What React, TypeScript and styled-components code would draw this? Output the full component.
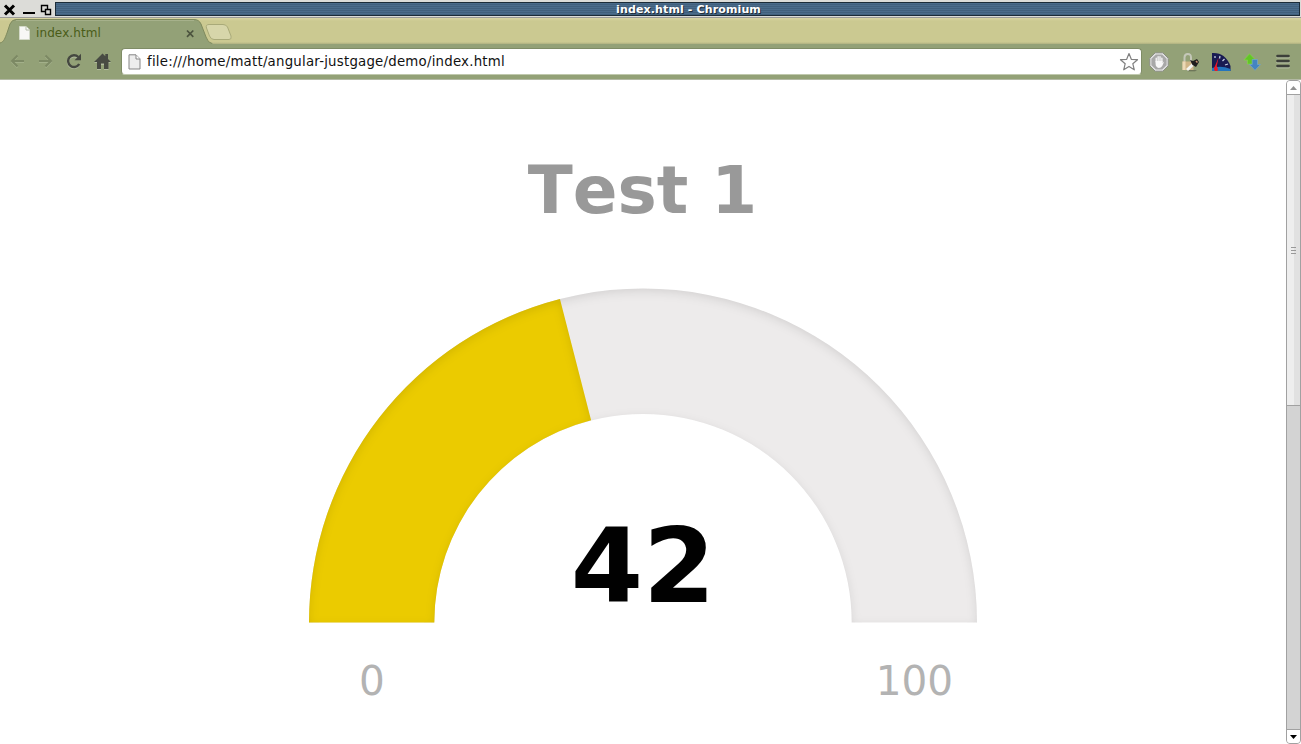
import React from 'react';
import styled, { createGlobalStyle } from 'styled-components';

const GlobalStyle = createGlobalStyle`
  html, body { margin: 0; padding: 0; overflow: hidden; background: #fff; }
  * { box-sizing: border-box; }
  svg { display: block; flex: none; }
`;

const Window = styled.div`
  width: 1301px;
  height: 744px;
  display: flex;
  flex-direction: column;
  font-family: "DejaVu Sans", sans-serif;
  overflow: hidden;
`;

const TitleBar = styled.header`
  height: 18px;
  flex: none;
  display: flex;
  background: #dcdcd8;
  padding-top: 2px;
  border-bottom: 1px solid #9b9b98;
`;

const WindowButtons = styled.div`
  width: 55px;
  flex: none;
`;

const Caption = styled.h1`
  margin: 0 1px 0 0;
  flex: 1;
  height: 14px;
  border: 1px solid #1c2c38;
  background: repeating-linear-gradient(#4b6c8b 0 1px, #41607d 1px 2px);
  color: #fff;
  font-size: 11px;
  line-height: 14px;
  font-weight: bold;
  letter-spacing: 0.13px;
  text-align: center;
  padding-left: 22px;
  text-shadow: 1px 1px 0 #222e38;
`;

const TabStrip = styled.nav`
  height: 26px;
  flex: none;
  position: relative;
  background: linear-gradient(#d8d5a2 0, #cbc991 3px, #cbc991 24px, #aeb080 26px);
`;

const TabShape = styled.svg`
  position: absolute;
  left: 0;
  top: 0;
`;

const TabContent = styled.div`
  position: relative;
  display: flex;
  align-items: center;
  width: 195px;
  height: 28px;
  padding: 2px 0 0 19px;
`;

const TabLabel = styled.span`
  flex: 1;
  margin-left: 6px;
  font-size: 12px;
  letter-spacing: 0.1px;
  line-height: 16px;
  color: #4a5c17;
`;

const Toolbar = styled.div`
  height: 36px;
  flex: none;
  display: flex;
  align-items: center;
  background: #93a177;
  border-bottom: 1px solid #b3b9a5;
  padding: 0 10px 0 9px;
`;

const NavButtons = styled.div`
  display: flex;
  gap: 12px;
  width: 112px;
`;

const AddressBar = styled.div`
  width: 1021px;
  height: 27px;
  display: flex;
  align-items: center;
  padding: 0 2px 0 6px;
  background: #fff;
  border: 1px solid #7f8c66;
  border-bottom-color: #c0c9ae;
  border-radius: 4px;
`;

const Url = styled.span`
  flex: 1;
  margin-left: 6px;
  font-size: 13.33px;
  line-height: 18px;
  letter-spacing: 0.22px;
  color: #111;
  white-space: nowrap;
`;

const Extensions = styled.div`
  display: flex;
  align-items: center;
  gap: 11px;
  margin-left: 7px;
`;

const Menu = styled.div`
  margin-left: 3px;
`;

const Viewport = styled.main`
  flex: 1;
  min-height: 0;
  display: flex;
  background: #fff;
`;

const Page = styled.section`
  width: 1286px;
  flex: none;
`;

const ScrollTrack = styled.aside`
  width: 15px;
  display: flex;
  flex-direction: column;
  background: #d3d3d3;
  border: 1px solid #a1a1a1;
  border-radius: 4px;
`;

const ScrollButton = styled.div<{ $end?: boolean }>`
  height: ${p => (p.$end ? '14px' : '13px')};
  flex: none;
  display: flex;
  align-items: center;
  justify-content: center;
  background: #fff;
  border-radius: ${p => (p.$end ? '0 0 3px 3px' : '3px 3px 0 0')};
  border-top: ${p => (p.$end ? '1px solid #a1a1a1' : '0')};
`;

const ScrollThumb = styled.div`
  height: 312px;
  flex: none;
  display: flex;
  align-items: center;
  justify-content: center;
  background: linear-gradient(90deg, #eee 0 7px, #e1e1e1 7px);
  border-top: 1px solid #a1a1a1;
  border-bottom: 1px solid #a1a1a1;
`;

const Gap = styled.div`
  flex: 1;
`;

function FileIcon({ outlined }: { outlined?: boolean }) {
  return outlined ? (
    <svg width="13" height="16" viewBox="0 0 13 16">
      <path d="M1 .8H8L12 4.8V15H1Z" fill="#ededed" stroke="#858585" />
      <path d="M8 1V5H12" fill="#fff" stroke="#858585" />
    </svg>
  ) : (
    <svg width="11" height="14" viewBox="0 0 11 14">
      <path d="M.5 .5H7L10.5 4V13.5H.5Z" fill="#f7f7f5" stroke="#d3d9c8" />
      <path d="M7 .5V4H10.5" fill="#fff" stroke="#b4bba6" />
    </svg>
  );
}

function BackArrow({ flip }: { flip?: boolean }) {
  return (
    <svg width="17" height="16" viewBox="0 0 17 16">
      <g transform={flip ? 'translate(16 0) scale(-1 1)' : undefined} fill="none" strokeWidth="2">
        <path d="M8.5 3.5L3 9L8.5 14.5M3.5 9H15" stroke="#a3b08a" />
        <path d="M8.5 2.5L3 8L8.5 13.5M3.5 8H15" stroke="#7c8964" />
      </g>
    </svg>
  );
}

function Gauge() {
  const cx = 643;
  const cy = 542.5;
  const outer = 334;
  const inner = 208.7;
  const band = (value: number) => {
    const a = (1 - value) * Math.PI;
    const at = (r: number) => `${cx + r * Math.cos(a)} ${cy - r * Math.sin(a)}`;
    return `M${cx - inner} ${cy}H${cx - outer}A${outer} ${outer} 0 0 1 ${at(outer)}L${at(inner)}A${inner} ${inner} 0 0 0 ${cx - inner} ${cy}Z`;
  };
  return (
    <svg width="1286" height="664" fontFamily="DejaVu Sans, sans-serif" textAnchor="middle">
      <defs>
        <filter id="inner-shadow" colorInterpolationFilters="sRGB">
          <feOffset dx="0" dy="3" />
          <feGaussianBlur result="offset-blur" stdDeviation="5" />
          <feComposite operator="out" in="SourceGraphic" in2="offset-blur" result="inverse" />
          <feFlood floodColor="#000" floodOpacity="0.1" result="color" />
          <feComposite operator="in" in="color" in2="inverse" result="shadow" />
          <feComposite operator="over" in="shadow" in2="SourceGraphic" />
        </filter>
      </defs>
      <path d={band(1)} fill="#edebeb" filter="url(#inner-shadow)" />
      <path d={band(0.42)} fill="#ebcb00" filter="url(#inner-shadow)" />
      <text x="642.5" y="133" fontSize="66" fontWeight="bold" fill="#999" style={{ fontKerning: 'none' }}>Test 1</text>
      <text x="643" y="522" fontSize="104" fontWeight="bold" fill="#010101">42</text>
      <text x="372" y="615" fontSize="40.6" fill="#b3b3b3">0</text>
      <text x="914.4" y="615" fontSize="40.6" fill="#b3b3b3">100</text>
    </svg>
  );
}

export default function App() {
  return (
    <Window>
      <GlobalStyle />
      <TitleBar>
        <WindowButtons>
          <svg width="55" height="15" viewBox="0 2 55 15">
            <path d="M5 5.5L14 14.5M14 5.5L5 14.5" stroke="#000" strokeWidth="3" />
            <path d="M23 13H35" stroke="#000" strokeWidth="2" />
            <path d="M41.5 5.5H47.5V11.5H41.5Z" fill="none" stroke="#000" strokeWidth="1.4" />
            <path d="M45.5 9.5H50.5V14.5H45.5Z" fill="#dcdcd8" stroke="#000" strokeWidth="1.4" />
          </svg>
        </WindowButtons>
        <Caption>index.html - Chromium</Caption>
      </TitleBar>
      <TabStrip>
        <TabShape width="240" height="26" viewBox="0 18 240 26">
          <path d="M0 43C4 42 5 38 7 33L10 24Q12 19.5 16 19.5H194Q199 19.5 201 24L206 37Q208 43.5 213 43.5V46H0Z" fill="#93a177" />
          <path d="M0 43C4 42 5 38 7 33L10 24Q12 19.5 16 19.5H194Q199 19.5 201 24L206 37Q208 43 212 43.5" fill="none" stroke="#7f8a5d" />
          <path d="M16 20.5H194" stroke="#a6b18b" />
          <path d="M209 24.5H223Q226 24.5 227.5 27L231 36Q232 39.5 229 39.5H214Q211 39.5 209.5 36L206.5 28Q205.5 24.5 209 24.5Z" fill="#d7d6aa" stroke="#a9aa79" />
        </TabShape>
        <TabContent>
          <FileIcon />
          <TabLabel>index.html</TabLabel>
          <svg width="9" height="9" viewBox="0 0 9 9"><path d="M1 1.5L7.3 7.8M7.3 1.5L1 7.8" stroke="#4b533e" strokeWidth="1.7" /></svg>
        </TabContent>
      </TabStrip>
      <Toolbar>
        <NavButtons>
          <BackArrow />
          <BackArrow flip />
          <svg width="15" height="16" viewBox="1 0 15 16">
            <path d="M12.5 11.5A5.8 5.8 0 1 1 12 4" transform="translate(0 1)" fill="none" stroke="#b1bb9e" strokeWidth="2.4" />
            <path d="M13.2 11A5.9 5.9 0 1 1 12.3 4" fill="none" stroke="#454840" strokeWidth="2.4" />
            <path d="M15 .8V7.2H8.5Z" fill="#454840" />
          </svg>
          <svg width="17" height="17" viewBox="0 0 17 17">
            <path d="M8.5 1.5L17 10H14.5V17H10V12H7V17H3V10H0Z" fill="#b1bb9e" />
            <path d="M8.5 .5L11.3 3.3V1H14V6L17 9H14.5V16H10V10.5H7V16H3V9H0Z" fill="#484b43" />
          </svg>
        </NavButtons>
        <AddressBar>
          <FileIcon outlined />
          <Url>file:///home/matt/angular-justgage/demo/index.html</Url>
          <svg width="20" height="20" viewBox="0 0 20 20"><path d="M10 1.5L12.3 7.3L18.5 7.7L13.8 11.7L15.3 17.8L10 14.4L4.7 17.8L6.2 11.7L1.5 7.7L7.7 7.3Z" fill="#fff" stroke="#808080" strokeWidth="1.2" strokeLinejoin="round" /></svg>
        </AddressBar>
        <Extensions>
          <svg width="20" height="20" viewBox="0 0 20 20">
            <path d="M6.2.8H13.8L19.2 6.2V13.8L13.8 19.2H6.2L.8 13.8V6.2Z" fill="#e4e4e4" stroke="#8a8d84" />
            <path d="M6.8 2.4H13.2L17.6 6.8V13.2L13.2 17.6H6.8L2.4 13.2V6.8Z" fill="#a8a8a8" />
            <path d="M7.2 10V6.2M9.1 9V4.7M11 9V4.7M12.9 10V6.2" stroke="#fff" strokeWidth="1.2" strokeLinecap="round" />
            <path d="M6.6 9H13.5V11L15.2 9.6L13.2 14Q12 16 9.8 16Q6.6 15 6.6 12Z" fill="#f7f7f7" />
          </svg>
          <svg width="20" height="20" viewBox="0 0 20 20">
            <path d="M4.5 10V5.5Q4.5 2 7.8 2T11 5.5V10" fill="none" stroke="#c4c7b8" strokeWidth="2" />
            <path d="M2.5 9.5H13.5V18H2.5Z" fill="#d0b588" />
            <path d="M2.5 9.5H5.5V18H2.5Z" fill="#ecd9b6" />
            <path d="M7 18.3H17L15 19.3H8Z" fill="#62694f" />
            <path d="M14 11.5L7 18" stroke="#f4f4ef" strokeWidth="3" />
            <path d="M10 8L13 9L17 7L19 10L16 15L12.5 13Z" fill="#201e1d" />
            <path d="M16 9L17.5 10.5" stroke="#cc9671" strokeWidth="1.5" />
          </svg>
          <svg width="20" height="20" viewBox="0 0 20 20">
            <path d="M1 19V1Q8 .5 12.5 4T19.5 14V19Z" fill="#191b52" />
            <path d="M1 19V16Q10 13 19.5 17V19Z" fill="#2475bd" />
            <path d="M4 4V6M9 4L8.5 6.5M13.5 7L11.5 9M17 12L14 13" stroke="#c2cce0" strokeWidth="1.3" />
            <path d="M7.6 5.5L4 14Q2 17 4 19H6.5Q7.5 17 5.8 14Z" fill="#ed1727" />
          </svg>
          <svg width="20" height="20" viewBox="0 0 20 20">
            <path d="M7.5 1.8L13.5 8H10.5V12H5.5V8H2Z" fill="#62c527" stroke="#83d745" strokeWidth=".7" />
            <path d="M10.2 7.5H15.5V12.5H18.5L13 18.3L7.5 12.5H10.2Z" fill="#4484c2" stroke="#75a7c9" strokeWidth=".7" />
          </svg>
          <Menu>
            <svg width="14" height="15" viewBox="0 0 14 15">
              <path d="M1.5 3.2H12.5M1.5 8.2H12.5M1.5 13.2H12.5" stroke="#b1bb9e" strokeWidth="2.6" strokeLinecap="round" />
              <path d="M1.5 2H12.5M1.5 7H12.5M1.5 12H12.5" stroke="#3d403a" strokeWidth="2.6" strokeLinecap="round" />
            </svg>
          </Menu>
        </Extensions>
      </Toolbar>
      <Viewport>
        <Page>
          <Gauge />
        </Page>
        <ScrollTrack>
          <ScrollButton>
            <svg width="7" height="4" viewBox="0 0 7 4"><path d="M0 4L3.5 0L7 4Z" fill="#929292" /></svg>
          </ScrollButton>
          <ScrollThumb>
            <svg width="5" height="7" viewBox="0 0 5 7"><path d="M0 .5H5M0 3.5H5M0 6.5H5" stroke="#999" /></svg>
          </ScrollThumb>
          <Gap />
          <ScrollButton $end>
            <svg width="7" height="4" viewBox="0 0 7 4"><path d="M0 0H7L3.5 4Z" fill="#000" /></svg>
          </ScrollButton>
        </ScrollTrack>
      </Viewport>
    </Window>
  );
}
